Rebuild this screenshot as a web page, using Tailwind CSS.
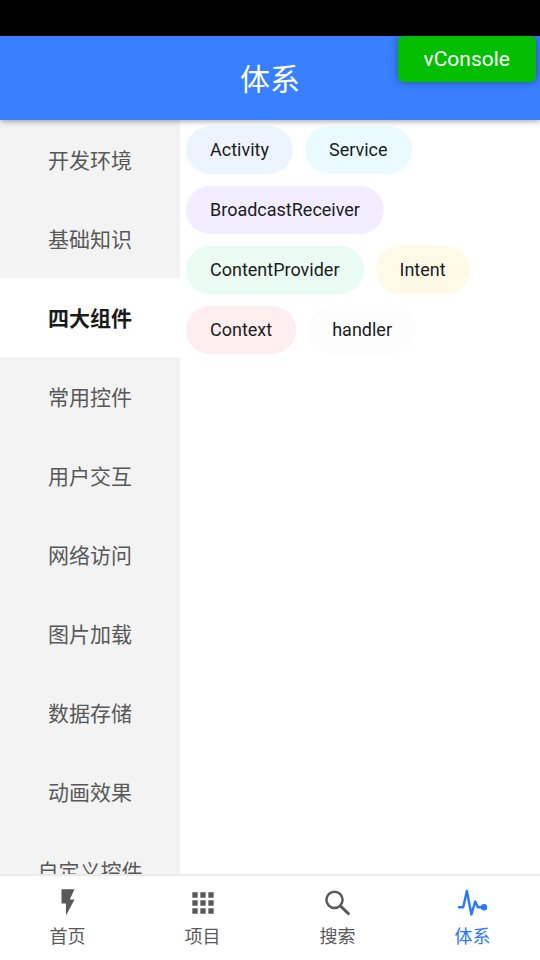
<!DOCTYPE html>
<html lang="zh-CN">
<head>
<meta charset="utf-8">
<meta name="viewport" content="width=device-width, initial-scale=1">
<title>体系</title>
<script src="https://cdn.jsdelivr.net/npm/@tailwindcss/browser@4"></script>
</head>
<body class="flex h-screen flex-col overflow-hidden bg-white font-[Roboto,'Noto_Sans_CJK_SC',sans-serif] text-[#1b1b1b]">
  <div class="h-9 shrink-0 bg-black"></div>
  <header class="relative z-10 flex h-[84px] shrink-0 items-center justify-center bg-[#3880ff] pt-1 shadow-[0_1px_6px_rgba(0,0,0,0.4)]">
    <h1 class="text-[30px] leading-9 text-white">体系</h1>
    <button type="button" class="absolute top-0 right-1 h-[46px] rounded-md bg-[#04be02] px-[26px] text-[21px] leading-6 text-white shadow-[0_0_8px_rgba(0,0,0,0.4)]">vConsole</button>
  </header>

  <main class="flex min-h-0 flex-1">
    <nav aria-label="分类" class="flex w-1/3 flex-col overflow-hidden bg-[#f3f3f3] text-[21px] leading-8 text-[#585858]">
      <a href="#" class="flex h-[79px] shrink-0 items-center justify-center pt-0.5">开发环境</a>
      <a href="#" class="flex h-[79px] shrink-0 items-center justify-center pt-0.5">基础知识</a>
      <a href="#" aria-current="true" class="flex h-[79px] shrink-0 items-center justify-center bg-white pt-0.5 font-bold text-[#1b1b1b]">四大组件</a>
      <a href="#" class="flex h-[79px] shrink-0 items-center justify-center pt-0.5">常用控件</a>
      <a href="#" class="flex h-[79px] shrink-0 items-center justify-center pt-0.5">用户交互</a>
      <a href="#" class="flex h-[79px] shrink-0 items-center justify-center pt-0.5">网络访问</a>
      <a href="#" class="flex h-[79px] shrink-0 items-center justify-center pt-0.5">图片加载</a>
      <a href="#" class="flex h-[79px] shrink-0 items-center justify-center pt-0.5">数据存储</a>
      <a href="#" class="flex h-[79px] shrink-0 items-center justify-center pt-0.5">动画效果</a>
      <a href="#" class="flex h-[79px] shrink-0 items-center justify-center pt-0.5">自定义控件</a>
    </nav>
    <section class="flex flex-1 flex-wrap content-start gap-3 p-1.5 text-[18px] leading-6">
      <button type="button" class="h-12 rounded-full bg-[#edf4ff] px-6">Activity</button>
      <button type="button" class="h-12 rounded-full bg-[#e9fbff] px-6">Service</button>
      <button type="button" class="h-12 rounded-full bg-[#f2eeff] px-6">BroadcastReceiver</button>
      <button type="button" class="h-12 rounded-full bg-[#e9fbf2] px-6">ContentProvider</button>
      <button type="button" class="h-12 rounded-full bg-[#fffae8] px-6">Intent</button>
      <button type="button" class="h-12 rounded-full bg-[#ffeeef] px-6">Context</button>
      <button type="button" class="h-12 rounded-full bg-[#fdfdfd] px-6">handler</button>
    </section>
  </main>

  <nav aria-label="主导航" class="grid h-[86px] shrink-0 grid-cols-4 border-t-2 border-[#ebebeb] bg-white pt-[11px] text-[18px] leading-6 text-[#595959]">
    <a href="#" class="flex flex-col items-center gap-1.5">
      <svg class="size-8" viewBox="0 0 32 32" fill="currentColor" aria-hidden="true"><path d="M9.500 2.300V16.500H14V28.500L22.500 12.600H17.800L22.500 2.300z"/></svg>
      <span>首页</span>
    </a>
    <a href="#" class="flex flex-col items-center gap-1.5">
      <svg class="size-8" viewBox="0 0 24 24" fill="currentColor" aria-hidden="true"><path d="M4 8h4V4H4v4zm6 12h4v-4h-4v4zm-6 0h4v-4H4v4zm0-6h4v-4H4v4zm6 0h4v-4h-4v4zm6-10v4h4V4h-4zm-6 4h4V4h-4v4zm6 6h4v-4h-4v4zm0 6h4v-4h-4v4z"/></svg>
      <span>项目</span>
    </a>
    <a href="#" class="flex flex-col items-center gap-1.5">
      <svg class="size-8" viewBox="0 0 32 32" fill="none" stroke="currentColor" aria-hidden="true"><circle cx="12.500" cy="12.800" r="8.100" stroke-width="2.500"/><path d="M18.300 18.800l9 8.700" stroke-width="3"/></svg>
      <span>搜索</span>
    </a>
    <a href="#" aria-current="page" class="flex flex-col items-center gap-1.5 text-[#2777ff]">
      <svg class="size-8" viewBox="0 0 32 32" fill="none" stroke="currentColor" stroke-width="2.400" stroke-linecap="round" stroke-linejoin="round" aria-hidden="true"><path d="M2 20.200h4.200L9.900 4l4.500 23.500 3.800-13 2.600 5.700H27"/><circle cx="27" cy="20.200" r="3.200" fill="currentColor" stroke="none"/></svg>
      <span>体系</span>
    </a>
  </nav>
</body>
</html>
